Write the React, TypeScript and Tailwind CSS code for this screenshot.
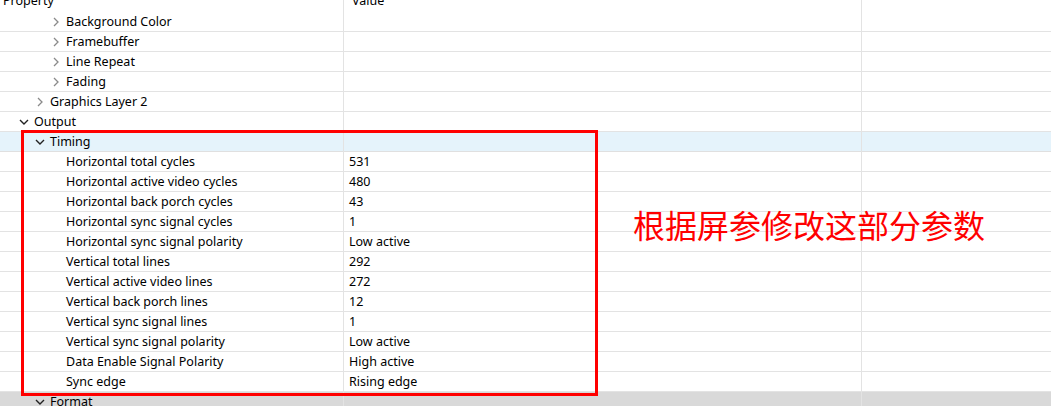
import React from 'react';

type Row = {
    label: string;
    value?: string;
    level: number;
    arrow?: 'right' | 'down';
    highlight?: boolean;
    selected?: boolean;
};

const rows: Row[] = [
    { label: 'Background Color', level: 2, arrow: 'right' },
    { label: 'Framebuffer', level: 2, arrow: 'right' },
    { label: 'Line Repeat', level: 2, arrow: 'right' },
    { label: 'Fading', level: 2, arrow: 'right' },
    { label: 'Graphics Layer 2', level: 1, arrow: 'right' },
    { label: 'Output', level: 0, arrow: 'down' },
    { label: 'Timing', level: 1, arrow: 'down', highlight: true },
    { label: 'Horizontal total cycles', value: '531', level: 2 },
    { label: 'Horizontal active video cycles', value: '480', level: 2 },
    { label: 'Horizontal back porch cycles', value: '43', level: 2 },
    { label: 'Horizontal sync signal cycles', value: '1', level: 2 },
    { label: 'Horizontal sync signal polarity', value: 'Low active', level: 2 },
    { label: 'Vertical total lines', value: '292', level: 2 },
    { label: 'Vertical active video lines', value: '272', level: 2 },
    { label: 'Vertical back porch lines', value: '12', level: 2 },
    { label: 'Vertical sync signal lines', value: '1', level: 2 },
    { label: 'Vertical sync signal polarity', value: 'Low active', level: 2 },
    { label: 'Data Enable Signal Polarity', value: 'High active', level: 2 },
    { label: 'Sync edge', value: 'Rising edge', level: 2 },
    { label: 'Format', level: 1, arrow: 'down', selected: true },
];

const indent = ['pl-[18px]', 'pl-[34px]', 'pl-[50px]'];

const Arrow = ({ dir }: { dir?: 'right' | 'down' }) => {
    if (!dir) return <span className="w-[16px] shrink-0" />;
    return (
        <span className="w-[16px] shrink-0 flex items-center justify-start">
            {dir === 'right' ? (
                <svg width="10" height="10" viewBox="0 0 10 10" className="ml-[1px]">
                    <polyline points="3,1 7,5 3,9" fill="none" stroke="#8a8a8a" strokeWidth="1.3" />
                </svg>
            ) : (
                <svg width="10" height="10" viewBox="0 0 10 10" className="ml-[1px]">
                    <polyline points="1,3 5,7 9,3" fill="none" stroke="#222" strokeWidth="1.4" />
                </svg>
            )}
        </span>
    );
};

const App = () => {
    return (
        <div
            className="relative w-[1051px] h-[406px] overflow-hidden bg-white text-[12.5px] text-black"
            style={{ fontFamily: '"Noto Sans", "Noto Sans CJK SC", sans-serif' }}
        >
            {/* header, scrolled so only the bottom shows */}
            <div className="grid grid-cols-[344px_518px_1fr] h-[12px] overflow-hidden">
                <div className="border-r border-[#e3e3e3]">
                    <div className="h-[20px] -mt-[9px] leading-[20px] pl-[3px]">Property</div>
                </div>
                <div className="border-r border-[#e3e3e3]">
                    <div className="h-[20px] -mt-[9px] leading-[20px] pl-[8px]">Value</div>
                </div>
                <div />
            </div>

            {rows.map((r, i) => (
                <div
                    key={i}
                    className={
                        'grid grid-cols-[344px_518px_1fr] h-[20px] border-b ' +
                        (r.selected
                            ? 'bg-[#d9d9d9] border-[#d9d9d9]'
                            : r.highlight
                            ? 'bg-[#e5f3fb] border-[#e0e0e0]'
                            : 'border-[#e3e3e3]')
                    }
                >
                    <div className={'flex items-center border-r border-[#e3e3e3] ' + indent[r.level]}>
                        <Arrow dir={r.arrow} />
                        <span className="leading-[20px] whitespace-nowrap">{r.label}</span>
                    </div>
                    <div className="flex items-center border-r border-[#e3e3e3] pl-[5px] leading-[20px]">
                        {r.value}
                    </div>
                    <div />
                </div>
            ))}

            {/* annotation */}
            <div className="absolute left-[21px] top-[130px] w-[577px] h-[266px] border-[3px] border-[#ff0000] pointer-events-none" />
            <div
                className="absolute left-[633px] top-[202px] text-[32px] leading-[44px] text-[#ff0000] whitespace-nowrap"
                style={{ fontFamily: '"Noto Sans CJK SC", sans-serif' }}
            >
                根据屏参修改这部分参数
            </div>
        </div>
    );
};

export default App;
